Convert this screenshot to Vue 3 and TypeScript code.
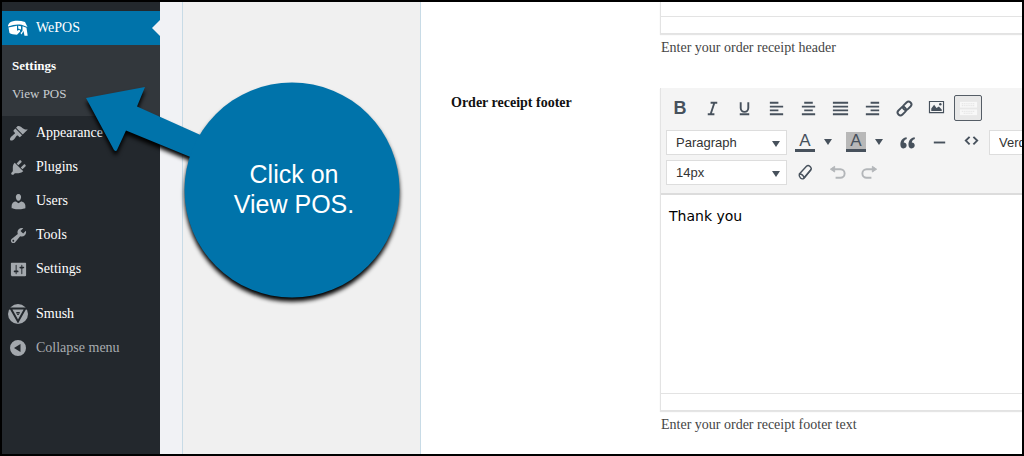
<script setup lang="ts">
import { ref } from 'vue'

interface MenuItem {
  label: string
  icon: string
}

interface Tool {
  name: string
  path: string
}

const menu: MenuItem[] = [
  {
    label: 'Appearance',
    icon: 'M14.48 11.06L7.41 3.99l1.5-1.5c.5-.56 2.3-.47 3.51.32 1.21.8 1.43 1.28 2.91 2.1 1.18.64 2.45 1.26 4.45.85zm-.71.71L6.7 4.7 4.93 6.47c-.39.39-.39 1.02 0 1.41l1.06 1.06c.39.39.39 1.03 0 1.42-.6.6-1.43 1.11-2.21 1.69-.35.26-.7.53-1.01.84C1.43 14.23.4 16.08 1.4 17.07c.99 1 2.84-.03 4.18-1.36.31-.31.58-.66.85-1.02.57-.78 1.08-1.61 1.69-2.21.39-.39 1.02-.39 1.41 0l1.06 1.06c.39.39 1.02.39 1.41 0z',
  },
  {
    label: 'Plugins',
    icon: 'M13.11 4.36L9.87 7.6 8 5.73l3.24-3.24c.35-.34 1.05-.2 1.56.32.52.51.66 1.21.31 1.55zm-8 1.77l.91-1.12 9.01 9.01-1.19.84c-.71.71-2.63 1.16-3.82 1.16H6.14L4.9 17.26c-.59.59-1.54.59-2.12 0-.59-.58-.59-1.53 0-2.12l1.24-1.24v-3.88c0-1.13.4-3.19 1.09-3.89zm7.26 3.97l3.24-3.24c.34-.35 1.04-.21 1.55.31.52.51.66 1.21.31 1.55l-3.24 3.25z',
  },
  {
    label: 'Users',
    icon: 'M10 9.25c-2.27 0-2.73-3.44-2.73-3.44C7 4.02 7.82 2 9.97 2c2.16 0 2.98 2.02 2.71 3.81 0 0-.41 3.44-2.68 3.44zm0 2.57L12.72 10c2.39 0 4.52 2.33 4.52 4.53v2.49s-3.65 1.13-7.24 1.13c-3.65 0-7.24-1.13-7.24-1.13v-2.49c0-2.25 1.94-4.48 4.47-4.48z',
  },
  {
    label: 'Tools',
    icon: 'M16.68 9.77c-1.34 1.34-3.3 1.67-4.95.99l-5.41 6.52c-.99.99-2.59.99-3.58 0s-.99-2.59 0-3.57l6.52-5.42c-.68-1.65-.35-3.61.99-4.95 1.28-1.28 3.12-1.62 4.72-1.06l-2.89 2.89 2.82 2.82 2.86-2.87c.53 1.58.18 3.39-1.08 4.65zM3.81 16.21c.4.39 1.04.39 1.43 0 .4-.4.4-1.04 0-1.43-.39-.4-1.03-.4-1.43 0-.39.39-.39 1.03 0 1.43z',
  },
  {
    label: 'Settings',
    icon: 'M18 16V4c0-.55-.45-1-1-1H3c-.55 0-1 .45-1 1v12c0 .55.45 1 1 1h14c.55 0 1-.45 1-1zM8 11h1c.55 0 1 .45 1 1s-.45 1-1 1H8v1.5c0 .28-.22.5-.5.5s-.5-.22-.5-.5V13H6c-.55 0-1-.45-1-1s.45-1 1-1h1V5.5c0-.28.22-.5.5-.5s.5.22.5.5V11zm5-2h-1c-.55 0-1-.45-1-1s.45-1 1-1h1V5.5c0-.28.22-.5.5-.5s.5.22.5.5V7h1c.55 0 1 .45 1 1s-.45 1-1 1h-1v5.5c0 .28-.22.5-.5.5s-.5-.22-.5-.5V9z',
  },
]

const formatTools: Tool[] = [
  { name: 'Underline', path: 'M6 3.5v6a4 4 0 0 0 8 0v-6M5 16h10' },
  { name: 'Align left', path: 'M3 4h9M3 8h14M3 12h9M3 16h14' },
  { name: 'Align center', path: 'M5.5 4h9M3 8h14M5.5 12h9M3 16h14' },
  { name: 'Justify', path: 'M2 4h16M2 8h16M2 12h16M2 16h16' },
  { name: 'Align right', path: 'M8 4h9M3 8h14M8 12h9M3 16h14' },
]

const footerText = ref('Thank you')
const block = ref('Paragraph')
const size = ref('14px')
const family = ref('Verdana')
</script>

<template>
  <div class="frame">
    <nav class="sidebar" aria-label="Admin menu">
      <a class="item current" href="#wepos">
        <span class="icon">
          <svg class="logo" viewBox="0 0 22 18" aria-hidden="true">
            <path d="M1 6.5C2 3.5 3.500 2.500 6 2.200 10 1.500 14 1.700 18 3l2.500 5-6-2.200C10 5 6 5.800 1 7.500z" />
            <path d="M1.500 8.500L10 6.700v5l2.600-.9.600 1.700L10 15.700C7 15.700 4 15 2.500 14z" />
            <path d="M11.200 6.800l2.800.5v3.200l-2.800-1z" />
            <path d="M15.500 7.200l4 1.500 1.200 8h-3.200L16.500 12l-2 3.500-1-1.500 2-2z" />
          </svg>
        </span>
        <span>WePOS</span>
      </a>
      <div class="submenu">
        <a class="selected" href="#settings">Settings</a>
        <a href="#view-pos">View POS</a>
      </div>
      <a v-for="entry in menu" :key="entry.label" class="item" :href="'#' + entry.label.toLowerCase()">
        <span class="icon">
          <svg viewBox="0 0 20 20" aria-hidden="true"><path :d="entry.icon" /></svg>
        </span>
        <span>{{ entry.label }}</span>
      </a>
      <a class="item spaced" href="#smush">
        <span class="icon">
          <svg class="round" viewBox="0 0 20 20" aria-hidden="true">
            <circle cx="10" cy="10" r="10" />
            <path class="cut" d="M1 4.500h18M3 5l7 12.500L17 5" />
            <path class="cut fine" d="M8.500 8.500h3L10 11z" />
          </svg>
        </span>
        <span>Smush</span>
      </a>
      <button class="item collapse" type="button">
        <span class="icon">
          <svg class="small" viewBox="0 0 16 16" aria-hidden="true">
            <path fill-rule="evenodd" d="M8 0a8 8 0 1 1 0 16A8 8 0 0 1 8 0zm2.500 4L4 8l6.500 4z" />
          </svg>
        </span>
        <span>Collapse menu</span>
      </button>
    </nav>

    <div class="gutter"></div>
    <div class="tabs"></div>

    <main class="form">
      <div class="field">
        <div></div>
        <div class="control">
          <div class="editor">
            <div class="page-end"></div>
            <div class="status"></div>
          </div>
          <p class="help">Enter your order receipt header</p>
        </div>
      </div>

      <div class="field footer">
        <label class="title" for="receipt-footer">Order receipt footer</label>
        <div class="control">
          <div class="editor">
            <div class="toolbar">
              <div class="row first">
                <button class="tool bold" type="button" aria-label="Bold">B</button>
                <button class="tool" type="button" aria-label="Italic">
                  <svg class="line" viewBox="0 0 20 20" aria-hidden="true"><path d="M8 4h7M5 16h7M12 4L8 16" /></svg>
                </button>
                <button v-for="tool in formatTools" :key="tool.name" class="tool" type="button" :aria-label="tool.name">
                  <svg class="line" viewBox="0 0 20 20" aria-hidden="true"><path :d="tool.path" /></svg>
                </button>
                <button class="tool" type="button" aria-label="Link">
                  <svg class="line" viewBox="0 0 20 20" aria-hidden="true">
                    <g transform="rotate(-45 10 10)">
                      <rect x="1" y="7" width="10" height="6" rx="3" />
                      <rect x="9" y="7" width="10" height="6" rx="3" />
                    </g>
                  </svg>
                </button>
                <button class="tool" type="button" aria-label="Image">
                  <svg viewBox="0 0 20 20" aria-hidden="true">
                    <path fill-rule="evenodd" d="M2 2h16v13H2zM3.200 3.200v10.600h13.600V3.200z" />
                    <path d="M4.500 12.500V10l3-4 2.500 3.500L12.500 8l3 3v1.500z" />
                    <circle cx="14" cy="5.500" r="1.300" />
                  </svg>
                </button>
                <button class="tool pressed" type="button" aria-label="Toolbar toggle" aria-pressed="true">
                  <svg class="keys" viewBox="0 0 20 20" aria-hidden="true">
                    <rect x="1" y="3" width="18" height="6" />
                    <rect x="1" y="11" width="18" height="6" />
                    <path d="M3 5h14M3 7h14M3 13h14M5 15h10" />
                  </svg>
                </button>
              </div>

              <div class="row">
                <span class="pick">
                  <select v-model="block" aria-label="Block format"><option>Paragraph</option></select>
                  <i class="caret"></i>
                </span>
                <span class="split">
                  <button class="tool" type="button" aria-label="Text color"><span class="letter">A</span></button>
                  <button class="drop" type="button" aria-label="Text color options"><i class="caret"></i></button>
                </span>
                <span class="split">
                  <button class="tool" type="button" aria-label="Background color"><span class="letter filled">A</span></button>
                  <button class="drop" type="button" aria-label="Background color options"><i class="caret"></i></button>
                </span>
                <button class="tool" type="button" aria-label="Blockquote">
                  <svg viewBox="0 0 20 20" aria-hidden="true">
                    <path d="M9 4.500C5 5 2.500 8 2.500 12c0 2.500 1.300 4.200 3.400 4.200 1.900 0 3.200-1.300 3.200-3.200S7.800 9.900 6 9.900c.3-1.800 1.400-3 3.300-3.700zM17.500 4.500c-4 .5-6.500 3.500-6.500 7.500 0 2.500 1.300 4.200 3.400 4.200 1.900 0 3.200-1.300 3.200-3.200s-1.300-3.100-3.100-3.100c.3-1.800 1.400-3 3.300-3.700z" />
                  </svg>
                </button>
                <button class="tool" type="button" aria-label="Horizontal line">
                  <svg class="line" viewBox="0 0 20 20" aria-hidden="true"><path d="M4 10h12" /></svg>
                </button>
                <button class="tool" type="button" aria-label="Source code">
                  <svg class="line" viewBox="0 0 20 20" aria-hidden="true"><path d="M8 4L4 8l4 4M12 4l4 4-4 4" /></svg>
                </button>
                <span class="pick">
                  <select v-model="family" aria-label="Font family"><option>Verdana</option></select>
                  <i class="caret"></i>
                </span>
              </div>

              <div class="row">
                <span class="pick">
                  <select v-model="size" aria-label="Font size"><option>14px</option></select>
                  <i class="caret"></i>
                </span>
                <button class="tool" type="button" aria-label="Clear formatting">
                  <svg class="line thin" viewBox="0 0 20 20" aria-hidden="true">
                    <path d="M3.500 11.500L11 3.500c1-1 2.500-1 3.500 0l1 1c.8.900.8 2 0 3L8.500 16c-2.500 2-6-1-5-4.500z" />
                    <path d="M3.500 11.500c2 0 4.500 1.500 5 4.500M16 6.500L8.500 15.500" />
                  </svg>
                </button>
                <button class="tool" type="button" aria-label="Undo" disabled>
                  <svg class="line" viewBox="0 0 20 20" aria-hidden="true"><path d="M5 6.500h8a4.500 4.500 0 0 1 0 9H8" /><path class="solid" d="M7 3.500v6l-4.500-3z" /></svg>
                </button>
                <button class="tool" type="button" aria-label="Redo" disabled>
                  <svg class="line" viewBox="0 0 20 20" aria-hidden="true"><path d="M15 6.500H7a4.500 4.500 0 0 0 0 9h5" /><path class="solid" d="M13 3.500v6l4.500-3z" /></svg>
                </button>
              </div>
            </div>
            <textarea id="receipt-footer" v-model="footerText" spellcheck="false"></textarea>
            <div class="status"></div>
          </div>
          <p class="help">Enter your order receipt footer text</p>
        </div>
      </div>
    </main>

    <aside class="callout">
      <svg viewBox="0 0 330 230" aria-hidden="true">
        <path d="M6 18L65 7 57 26.500 125 57V83L46 50.500 37 70q-1 2-3 0z" />
        <circle cx="212" cy="110" r="107.500" />
      </svg>
      <p>Click on<br />View POS.</p>
    </aside>
  </div>
</template>

<style>
body {
  margin: 0;
}
</style>

<style scoped>
.frame {
  position: relative;
  display: flex;
  box-sizing: border-box;
  min-height: 100vh;
  border: 2px solid #000;
  overflow: hidden;
  background: #fff;
  font: 14px/20px "Liberation Serif", "Times New Roman", serif;
}

svg {
  display: block;
  width: 19px;
  height: 19px;
  fill: currentColor;
}

button {
  padding: 0;
  border: 0;
  background: none;
  font: inherit;
}

/* Sidebar */
.sidebar {
  box-sizing: border-box;
  flex: none;
  width: 158px;
  padding-top: 9px;
  background: #23282d;
}

.item {
  display: flex;
  align-items: center;
  gap: 2px;
  width: 100%;
  height: 34px;
  color: #fff;
  text-decoration: none;
}

.icon {
  display: flex;
  justify-content: center;
  width: 32px;
  color: #a3a8ad;
}

.current {
  position: relative;
  background: #0073aa;
}

.current .icon {
  color: #fff;
}

.current::after {
  content: "";
  position: absolute;
  right: 0;
  border: 8px solid transparent;
  border-left-width: 0;
  border-right-color: #f1f2f5;
}

.logo {
  width: 22px;
  height: 18px;
}

.round {
  width: 20px;
  height: 20px;
}

.small {
  width: 16px;
  height: 16px;
}

.cut {
  fill: none;
  stroke: #23282d;
  stroke-width: 2;
}

.fine {
  stroke-width: 1;
}

.spaced {
  margin-top: 11px;
}

.collapse {
  color: #a8acb0;
}

.submenu {
  padding: 7px 10px 8px;
  background: #32373c;
  font-size: 13px;
}

.submenu a {
  display: block;
  line-height: 28px;
  color: #c8ccd0;
  text-decoration: none;
}

.submenu .selected {
  color: #fff;
  font-weight: bold;
}

/* Page columns */
.gutter {
  flex: none;
  width: 22px;
  background: #f1f2f5;
}

.tabs {
  box-sizing: border-box;
  flex: none;
  width: 239px;
  border: solid #c8dbe6;
  border-width: 0 1px;
  background: #f0f0f0;
}

.form {
  flex: 1;
  min-width: 0;
}

.field {
  display: grid;
  grid-template-columns: 209px minmax(0, 1fr);
  padding-left: 30px;
}

.footer {
  margin-top: 30px;
}

.title {
  padding-top: 5px;
  color: #111;
  font-weight: bold;
}

.help {
  margin: 4px 0 0 1px;
  color: #444;
}

/* Editor */
.editor {
  border: solid #e3e3e3;
  border-width: 0 0 1px 1px;
  box-shadow: 0 1px 1px rgba(0, 0, 0, 0.1);
}

.page-end {
  height: 14px;
}

.status {
  height: 16px;
  border-top: 1px solid #e3e3e3;
}

.toolbar {
  padding: 5px 0 6px 3px;
  overflow: hidden;
  border-bottom: 2px solid #dcdcdc;
  background: #f4f4f4;
  color: #47515c;
  font-family: "Liberation Sans", Arial, sans-serif;
}

.row {
  display: flex;
  align-items: center;
  height: 30px;
}

.first {
  margin-bottom: 4px;
}

.tool {
  display: flex;
  flex: none;
  align-items: center;
  justify-content: center;
  width: 32px;
  height: 26px;
  color: inherit;
}

.tool:disabled {
  color: #b3b6b9;
}

.bold {
  font-size: 18px;
  font-weight: bold;
}

.line {
  fill: none;
  stroke: currentColor;
  stroke-width: 2;
}

.thin {
  stroke-width: 1.5;
}

.solid {
  fill: currentColor;
  stroke-width: 1;
}

.pressed {
  box-sizing: border-box;
  width: 28px;
  margin-left: 2px;
  border: 1px solid #555d66;
  border-radius: 2px;
  background: #e8e8e8;
}

.keys {
  fill: #f8f8f8;
  stroke: none;
}

.keys path {
  fill: none;
  stroke: #dcdcdc;
  stroke-dasharray: 1 1;
}

.pick {
  position: relative;
  flex: none;
  width: 121px;
  height: 25px;
  margin: 0 2px;
}

select {
  box-sizing: border-box;
  width: 100%;
  height: 100%;
  padding: 0 9px;
  appearance: none;
  border: 1px solid #ddd;
  border-radius: 0;
  background: #fff;
  color: #333;
  font: 13px "Liberation Sans", Arial, sans-serif;
}

.caret {
  display: block;
  border: solid transparent;
  border-width: 6px 4px 0;
  border-top-color: #47515c;
}

.pick .caret {
  position: absolute;
  top: 11px;
  right: 7px;
  pointer-events: none;
}

.split {
  display: flex;
  flex: none;
  width: 51px;
}

.drop {
  display: flex;
  align-items: center;
  justify-content: center;
  width: 14px;
}

.letter {
  width: 20px;
  border-bottom: 3px solid #47515c;
  font-size: 17px;
  line-height: 17px;
}

.filled {
  background: #b8b8b8;
}

textarea {
  display: block;
  box-sizing: border-box;
  width: 100%;
  height: 198px;
  padding: 11px 8px;
  border: 0;
  outline: 0;
  resize: none;
  background: #fff;
  color: #000;
  font: 14px/20px Verdana, "DejaVu Sans", sans-serif;
}

/* Callout lying over the page */
.callout {
  position: absolute;
  top: 78px;
  left: 78px;
  width: 330px;
  height: 230px;
}

.callout svg {
  width: 330px;
  height: 230px;
  overflow: visible;
  fill: #0073aa;
  filter: drop-shadow(0 4px 2px #000);
}

.callout p {
  position: absolute;
  top: 79px;
  left: 104px;
  width: 220px;
  margin: 0;
  color: #fff;
  font: 25px/30px "Liberation Sans", Arial, sans-serif;
  text-align: center;
}
</style>
